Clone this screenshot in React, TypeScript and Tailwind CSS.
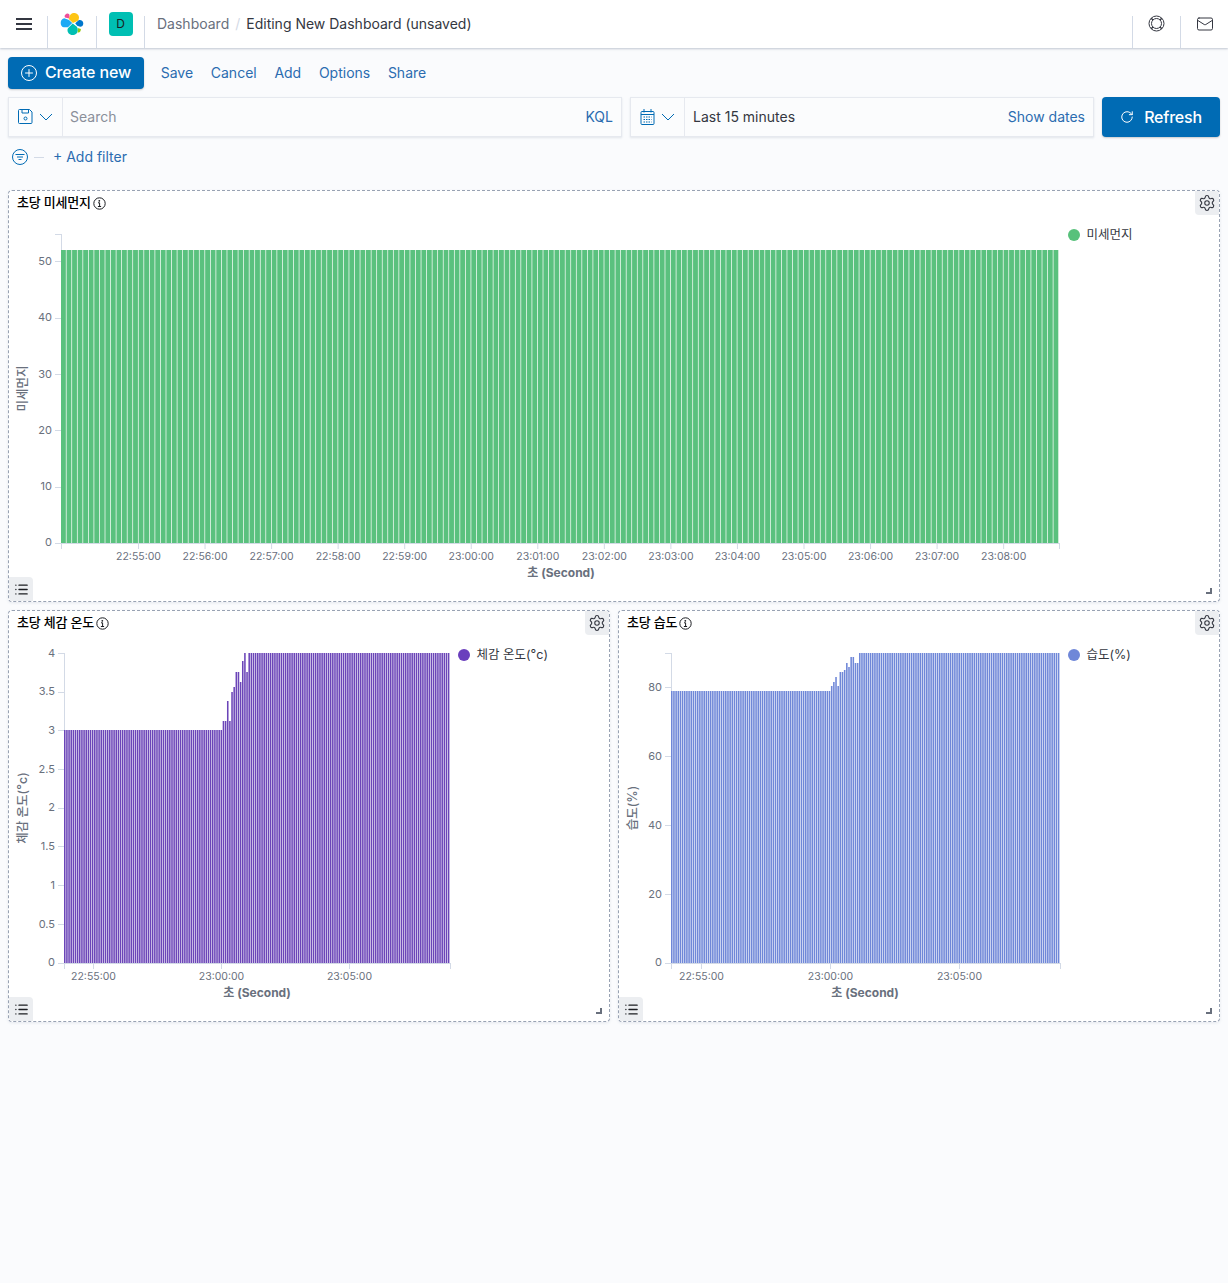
import React from "react";
import { Mail, RotateCw, Settings, List, Plus } from "lucide-react";

const FONT = "font-['Inter','Noto_Sans_CJK_KR',sans-serif]";
const AXIS = "#69707d";
const LINE = "#d3dae6";
const SVG_FONT = "Inter, 'Noto Sans CJK KR', sans-serif";

type Step = [number, number];

type ChartProps = {
  width: number;
  height: number;
  ox: number;
  oy: number;
  x0: number;
  x1: number;
  base: number;
  axisTop: number;
  color: string;
  gap: number;
  yTicks: [string, number][];
  xTicks: [string, number][];
  yTitle: string;
  yTitleX: number;
  xTitleX: number;
  xTitleY: number;
  tickLabelY: number;
  flat: number;
  steps: Step[];
};

function Chart(p: ChartProps) {
  const n = 180;
  const period = (p.x1 - p.x0) / n;
  const heightAt = (x: number) => {
    let y = p.flat;
    for (const [sx, sy] of p.steps) if (x >= sx) y = sy;
    return y;
  };
  const X = (x: number) => x - p.ox;
  const Y = (y: number) => y - p.oy;
  return (
    <svg width={p.width} height={p.height} className="block shrink-0">
      <line x1={X(p.x0) + 0.5} x2={X(p.x0) + 0.5} y1={Y(p.axisTop)} y2={Y(p.base) + 6} stroke={LINE} />
      {Array.from({ length: n }, (_, i) => {
        const x = p.x0 + i * period;
        const y = heightAt(x + period / 2);
        return <rect key={i} x={X(x)} y={Y(y)} width={period - p.gap} height={p.base - y} fill={p.color} />;
      })}
      <line x1={X(p.x0) - 6} x2={X(p.x1) + 0.5} y1={Y(p.base) + 0.5} y2={Y(p.base) + 0.5} stroke={LINE} />
      <line x1={X(p.x1) + 0.5} x2={X(p.x1) + 0.5} y1={Y(p.base)} y2={Y(p.base) + 6} stroke={LINE} />
      <line x1={X(p.x0) - 6} x2={X(p.x0)} y1={Y(p.axisTop) + 0.5} y2={Y(p.axisTop) + 0.5} stroke={LINE} />
      {p.yTicks.map(([t, y]) => (
        <g key={t}>
          <line x1={X(p.x0) - 6} x2={X(p.x0)} y1={Y(Math.round(y)) + 0.5} y2={Y(Math.round(y)) + 0.5} stroke={LINE} />
          <text x={X(p.x0) - 9} y={Y(y) + 3.5} textAnchor="end" fontSize={11} fill={AXIS} fontFamily={SVG_FONT}>
            {t}
          </text>
        </g>
      ))}
      {p.xTicks.map(([t, x]) => (
        <g key={t}>
          <line x1={X(x) + 0.5} x2={X(x) + 0.5} y1={Y(p.base)} y2={Y(p.base) + 6} stroke={LINE} />
          <text x={X(x) + 0.5} y={Y(p.tickLabelY)} textAnchor="middle" fontSize={10.5} fill={AXIS} fontFamily={SVG_FONT}>
            {t}
          </text>
        </g>
      ))}
      <text
        transform={`translate(${X(p.yTitleX)} ${Y((p.axisTop + p.base) / 2)}) rotate(-90)`}
        textAnchor="middle"
        fontSize={12.5}
        fontWeight={500}
        fill={AXIS}
        fontFamily={SVG_FONT}
      >
        {p.yTitle}
      </text>
      <text x={X(p.xTitleX)} y={Y(p.xTitleY)} textAnchor="middle" fontSize={12} fontWeight={700} fill={AXIS} fontFamily={SVG_FONT}>
        초 (Second)
      </text>
    </svg>
  );
}

function InfoIcon() {
  return (
    <svg width="13" height="13" viewBox="0 0 13 13" fill="none" className="ml-[2px] mt-[2px] shrink-0">
      <circle cx="6.500" cy="6.500" r="5.700" stroke="#1a1c21" strokeWidth="1" />
      <circle cx="6.300" cy="3.800" r="0.900" fill="#1a1c21" />
      <path d="M5 5.800h1.600v3.600M4.900 9.500h3.200" stroke="#1a1c21" strokeWidth="1" />
    </svg>
  );
}

function Panel({ title, legend, dot, children }: { title: string; legend: string; dot: string; children: React.ReactNode }) {
  return (
    <div className="relative flex h-[412px] flex-col rounded border border-dashed border-[#98a2b3] bg-white shadow-[0_1px_3px_rgba(152,162,179,0.2)]">
      <div className="flex h-[22px] items-center pl-2">
        <span className="text-[13px] font-medium leading-none tracking-[-0.2px] text-black">{title}</span>
        <InfoIcon />
      </div>
      <div className="flex flex-1 items-start">
        {children}
        <div className="mt-4 flex items-center gap-[6.500px]">
          <span className="h-3 w-3 rounded-full" style={{ backgroundColor: dot }} />
          <span className="text-[12.500px] leading-none text-[#343741]">{legend}</span>
        </div>
      </div>
      <div className="absolute right-0 top-0 flex h-6 w-6 items-center justify-center rounded-bl rounded-tr bg-[#eceef1]">
        <Settings size={18} strokeWidth={1.1} absoluteStrokeWidth className="text-[#343741]" />
      </div>
      <div className="absolute bottom-0 left-0 flex h-6 w-6 items-center justify-center rounded-bl rounded-tr bg-[#eceef1]">
        <List size={15} strokeWidth={1.4} absoluteStrokeWidth className="text-[#1a1c21]" />
      </div>
      <div className="absolute bottom-[7px] right-[7px] h-[6px] w-[6px] border-b-2 border-r-2 border-[#69707d]" />
    </div>
  );
}

function ElasticLogo() {
  return (
    <svg width="24" height="24" viewBox="0 0 24 24">
      <path d="M9 7.200C9 3.500 11 1 14 1s5 2.200 5 4.700c0 1-.4 2-1 3l-5 2.200-4-3.700z" fill="#FEC514" />
      <path d="M6.500 1.800c1.600-.6 3 .2 3 1.700 0 .9-.3 2-.4 2.900L5 5.500C4 4.200 5 2.400 6.500 1.800z" fill="#F04E98" />
      <path d="M4.300 6.300L9 7.900l3.200 3L8 15.200H4c-2 0-3.300-2-3.300-4.300 0-2.500 1.600-4.300 3.600-4.600z" fill="#1BA9F5" />
      <path d="M8.700 15.500l4-4 4.200 3.300c.6 1 .9 2 .9 3.200 0 3-2.300 5-5.300 5-3 0-5.300-2.500-5-5.500.1-.8.5-1.400 1.200-2z" fill="#00BFB3" />
      <path d="M18.700 8.200c2.500-.6 4.600.9 4.600 3.300 0 2-1.300 3.300-3.100 3.300l-3-1-2-2.500 3.500-3.100z" fill="#0077CC" />
      <path d="M17.700 15.900l3.200 1c0 1.700-.9 3.600-2.500 3.600h-1c.7-1.500.8-3 .3-4.600z" fill="#93C90E" />
    </svg>
  );
}

function FilterIcon() {
  return (
    <svg width="16" height="16" viewBox="0 0 16 16" fill="none" stroke="#006bb4" strokeWidth="1">
      <circle cx="8" cy="8" r="7.500" />
      <path d="M3.500 5.500h9M5 8h6M6.500 10.500h3" />
    </svg>
  );
}

function SaveIcon() {
  return (
    <svg width="15" height="15" viewBox="0 0 15 15" fill="none" stroke="#006bb4" strokeWidth="1">
      <path d="M1.500.5h10l2.500 2.500v10.500a1 1 0 0 1-1 1H1.500a1 1 0 0 1-1-1V1.500a1 1 0 0 1 1-1z" />
      <path d="M4 .5v3.500h6.500V.5" />
      <circle cx="7.500" cy="9.500" r="1.500" />
    </svg>
  );
}

function CalendarIcon() {
  return (
    <svg width="15" height="16" viewBox="0 0 15 16" fill="none" stroke="#006bb4" strokeWidth="1">
      <rect x="1" y="2.500" width="13" height="13" rx="1" />
      <path d="M1 5.500h13M4 0v3.500M11 0v3.500" />
      <path d="M3.500 8h8M3.500 10.500h8M3.500 13h8" strokeWidth="1.200" strokeDasharray="1.500 1" />
    </svg>
  );
}

function HelpIcon() {
  return (
    <svg width="17" height="17" viewBox="0 0 17 17" fill="none" stroke="#343741" strokeWidth="1">
      <circle cx="8.500" cy="8.500" r="7.500" />
      <circle cx="8.500" cy="8.500" r="5" />
      <path d="M3.200 3.200l1.800 1.800M13.800 3.200l-1.800 1.800M3.200 13.800l1.800-1.800M13.800 13.800l-1.800-1.800" strokeWidth="1.500" />
    </svg>
  );
}

function Chevron() {
  return (
    <svg width="14" height="8" viewBox="0 0 14 8" fill="none" stroke="#006bb4" strokeWidth="1">
      <path d="M1 1l6 6 6-6" />
    </svg>
  );
}

const NavCell = ({ children, className = "" }: { children: React.ReactNode; className?: string }) => (
  <div className={`flex h-full items-start justify-center ${className}`}>{children}</div>
);
const NavDivider = () => <div className="h-8 w-px shrink-0 self-end bg-[#d3dae6]" />;

const steps2: Step[] = [
  [222, 721], [226, 713], [228, 701], [230, 721], [232, 692], [234, 687], [236, 672],
  [240, 682], [243, 661], [245, 653], [246.5, 672], [249, 653],
];
const steps3: Step[] = [
  [830, 686], [834, 682], [836, 677], [838, 686], [840, 672], [843, 670], [845, 663],
  [849, 667], [851, 657], [854, 653], [855, 663], [858, 653],
];
const times1 = ["22:55:00","22:56:00","22:57:00","22:58:00","22:59:00","23:00:00","23:01:00","23:02:00","23:03:00","23:04:00","23:05:00","23:06:00","23:07:00","23:08:00"];

export default function App() {
  return (
    <div className={`${FONT} min-h-screen bg-[#fafbfd] text-[14px] text-[#343741]`}>
      <header className="flex h-12 items-start bg-white shadow-[0_1px_2px_rgba(152,162,179,0.6)]">
        <NavCell className="w-[47px] pt-[17px]">
          <svg width="16" height="14" viewBox="0 0 16 14" stroke="#343741" strokeWidth="2">
            <path d="M0 2h16M0 7h16M0 12h16" />
          </svg>
        </NavCell>
        <NavDivider />
        <NavCell className="w-12 pt-3">
          <ElasticLogo />
        </NavCell>
        <NavDivider />
        <NavCell className="w-[47px] pt-3">
          <div className="flex h-6 w-6 items-center justify-center rounded bg-[#00bfb3] text-[12px] text-[#1a1c21]">D</div>
        </NavCell>
        <NavDivider />
        <div className="flex h-12 flex-1 items-center pb-[1px] pl-3">
          <span className="text-[#69707d]">Dashboard</span>
          <span className="mx-[6px] text-[#d3dae6]">/</span>
          <span>Editing New Dashboard (unsaved)</span>
        </div>
        <NavDivider />
        <NavCell className="w-[47px] pt-[15px]">
          <HelpIcon />
        </NavCell>
        <NavDivider />
        <NavCell className="w-[47px] pt-[15px]">
          <Mail size={18} strokeWidth={1} absoluteStrokeWidth />
        </NavCell>
      </header>

      <div className="mt-[9px] flex h-[32px] items-center gap-[17.7px] px-2">
        <button className="mr-[-1px] flex h-8 w-[136px] items-center justify-center gap-2 rounded bg-[#006bb4] pb-[2px] text-[16px] font-medium tracking-[-0.1px] text-white shadow-[0_1px_2px_rgba(0,0,0,0.2)]">
          <span className="mt-[2px] flex h-4 w-4 items-center justify-center rounded-full border border-white">
            <Plus size={12} strokeWidth={1} absoluteStrokeWidth />
          </span>
          Create new
        </button>
        {["Save", "Cancel", "Add", "Options", "Share"].map((t) => (
          <span key={t} className="pb-[1px] text-[#2b6cb0]">{t}</span>
        ))}
      </div>

      <div className="mt-2 flex h-10 gap-2 px-2">
        <div className="flex w-[614px] items-center border border-[#e6e9ef] bg-[#fbfcfd] pb-[1px] shadow-[0_1px_2px_rgba(152,162,179,0.25)]">
          <div className="flex h-[38px] w-[54px] items-center justify-center gap-[6px] border-r border-[#e6e9ef]">
            <SaveIcon />
            <Chevron />
          </div>
          <span className="flex-1 pl-[7px] text-[#8a8f9a]">Search</span>
          <span className="pr-2 text-[#2b6cb0]">KQL</span>
        </div>
        <div className="flex w-[464px] items-center border border-[#e6e9ef] bg-[#fbfcfd] pb-[1px] shadow-[0_1px_2px_rgba(152,162,179,0.25)]">
          <div className="flex h-[38px] w-[54px] items-center justify-center gap-[6px] border-r border-[#e6e9ef]">
            <CalendarIcon />
            <Chevron />
          </div>
          <span className="flex-1 pl-2">Last 15 minutes</span>
          <span className="pr-2 text-[#2b6cb0]">Show dates</span>
        </div>
        <button className="flex w-[118px] items-center justify-center gap-[10px] rounded bg-[#006bb4] pb-[1px] text-[16px] font-medium tracking-[-0.2px] text-white shadow-[0_1px_2px_rgba(0,0,0,0.2)]">
          <RotateCw size={14} strokeWidth={1} absoluteStrokeWidth />
          Refresh
        </button>
      </div>

      <div className="mt-3 flex h-4 items-center gap-[6px] pl-3">
        <FilterIcon />
        <span className="h-px w-[10px] bg-[#d3dae6]" />
        <span className="ml-[3px] pb-[1px] text-[#2b6cb0]">+ Add filter</span>
      </div>

      <main className="mt-[25px] grid grid-cols-2 gap-2 px-2">
        <div className="col-span-2">
          <Panel title="초당 미세먼지" legend="미세먼지" dot="#57c17b">
            <Chart
              width={1059}
              height={366}
              ox={9}
              oy={213}
              x0={61}
              x1={1059}
              base={543}
              axisTop={234}
              color="#5ac17e"
              gap={0.7}
              flat={250}
              steps={[]}
              yTicks={[["0", 542.5], ["10", 486.5], ["20", 430], ["30", 374], ["40", 317.5], ["50", 261]]}
              xTicks={times1.map((t, i): [string, number] => [t, 138 + i * 66.55])}
              yTitle="미세먼지"
              yTitleX={27}
              xTitleX={561}
              xTitleY={577}
              tickLabelY={560}
            />
          </Panel>
        </div>
        <Panel title="초당 체감 온도" legend="체감 온도(°c)" dot="#6a3fbd">
          <Chart
            width={449}
            height={366}
            ox={9}
            oy={633}
            x0={64}
            x1={450}
            base={963}
            axisTop={653}
            color="#6b45b8"
            gap={0.6}
            flat={730}
            steps={steps2}
            yTicks={[["0", 962.5], ["0.5", 924], ["1", 885], ["1.5", 846], ["2", 807.5], ["2.5", 769], ["3", 730], ["3.5", 691.5], ["4", 653]]}
            xTicks={[["22:55:00", 93], ["23:00:00", 221], ["23:05:00", 349]]}
            yTitle="체감 온도(°c)"
            yTitleX={27}
            xTitleX={257}
            xTitleY={997}
            tickLabelY={980}
          />
        </Panel>
        <Panel title="초당 습도" legend="습도(%)" dot="#6f87d8">
          <Chart
            width={449}
            height={366}
            ox={619}
            oy={633}
            x0={671}
            x1={1060}
            base={963}
            axisTop={653}
            color="#6f87d8"
            gap={0.6}
            flat={691}
            steps={steps3}
            yTicks={[["0", 962.5], ["20", 894], ["40", 825], ["60", 756], ["80", 687]]}
            xTicks={[["22:55:00", 701], ["23:00:00", 830], ["23:05:00", 959]]}
            yTitle="습도(%)"
            yTitleX={637}
            xTitleX={865}
            xTitleY={997}
            tickLabelY={980}
          />
        </Panel>
      </main>
    </div>
  );
}
